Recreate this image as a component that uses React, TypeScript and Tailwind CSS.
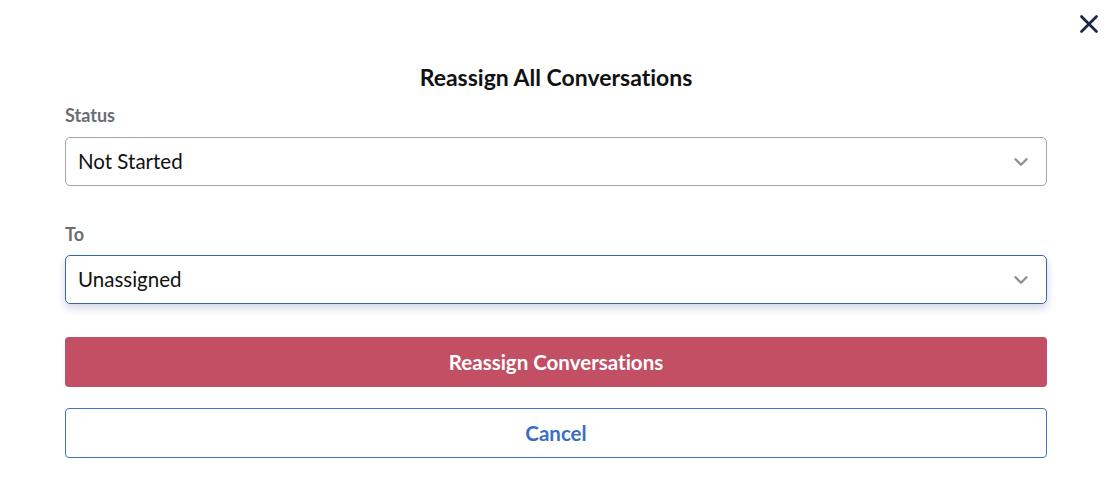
import { ChevronDown, X } from 'lucide-react'

function Select({ value, focused }: { value: string; focused?: boolean }) {
	return (
		<div
			className={
				focused
					? 'flex h-[49px] items-center justify-between rounded-[5px] border border-[#3f64a6] bg-white pl-[12px] pr-[14px] shadow-[0_4px_8px_rgba(60,90,150,0.25)]'
					: 'flex h-[49px] items-center justify-between rounded-[5px] border border-[#a4a6aa] bg-white pl-[12px] pr-[14px]'
			}
		>
			<span className="text-[20.5px] text-[#111]">{value}</span>
			<ChevronDown className="h-[22px] w-[22px] text-[#8e9093]" strokeWidth={2.6} />
		</div>
	)
}

export default function App() {
	return (
		<div
			className="relative h-[500px] w-[1112px] bg-white [font-variant-ligatures:none]"
			style={{ fontFamily: 'Lato, "Liberation Sans", sans-serif' }}
		>
			<button className="absolute right-[8px] top-[9px] text-[#1a2744]">
				<X className="h-[30px] w-[30px]" strokeWidth={2.2} />
			</button>
			<div className="flex flex-col px-[65px] pt-[62px]">
				<h1 className="text-center text-[23px] font-bold leading-[30px] text-[#111]">
					Reassign All Conversations
				</h1>
				<label className="mt-[12px] text-[18px] font-bold leading-[22px] text-[#6a6d72]">
					Status
				</label>
				<div className="mt-[11px]">
					<Select value="Not Started" />
				</div>
				<label className="mt-[37px] text-[18px] font-bold leading-[22px] text-[#6a6d72]">
					To
				</label>
				<div className="mt-[10px]">
					<Select value="Unassigned" focused />
				</div>
				<button className="mt-[33px] h-[50px] rounded-[4px] bg-[#c34f64] text-[20.5px] font-bold text-white">
					Reassign Conversations
				</button>
				<button className="mt-[21px] h-[50px] rounded-[4px] border border-[#3f76c6] bg-white text-[20.5px] font-bold text-[#3a6fbf]">
					Cancel
				</button>
			</div>
		</div>
	)
}
